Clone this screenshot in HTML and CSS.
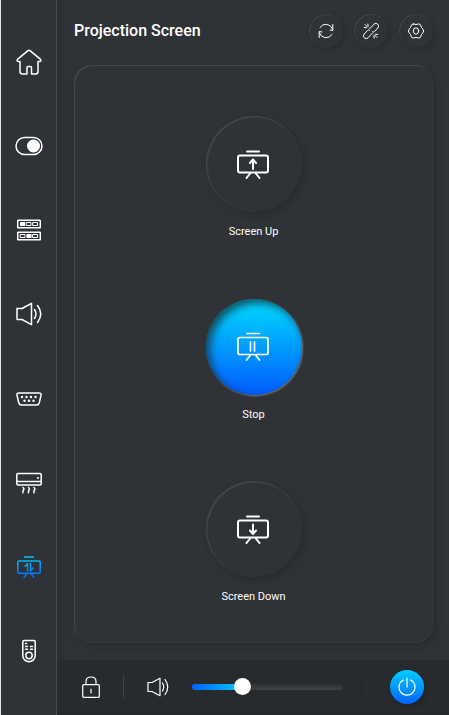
FILE: index.html
```html
<!DOCTYPE html>
<html lang="en">
<head>
<meta charset="utf-8">
<meta name="viewport" content="width=device-width, initial-scale=1">
<title>Projection Screen</title>
<link rel="stylesheet" href="styles.css">
</head>
<body>
<div class="app">
  <nav class="sidebar" aria-label="Room controls">
    <a class="nav-item" href="#home" aria-label="Home">
      <svg class="icon" width="26" height="26" viewBox="0 0 26 26"><path d="M4 12.5H2.2C.8 12.3.8 11 1.700 10.200L12 1.600Q13 .9 14 1.600L24.300 10.200C25.200 11 25.200 12.300 23.800 12.500H22V22.500Q22 25 19.500 25H15.500V18.500Q15.500 17.500 14.500 17.500H12Q11 17.500 11 18.500V25H6.500Q4 25 4 22.500Z"/></svg>
    </a>
    <a class="nav-item" href="#switch" aria-label="Switch">
      <svg class="icon" width="28" height="20" viewBox="0 0 28 20"><rect x="1" y="1.500" width="26" height="17" rx="8.500"/><circle class="solid" cx="18.500" cy="10" r="6.500"/></svg>
    </a>
    <a class="nav-item" href="#sources" aria-label="Sources">
      <svg class="icon" width="24" height="22" viewBox="0 0 24 22"><rect x=".7" y="1.200" width="22.600" height="7.600" rx=".6"/><rect x=".7" y="13.200" width="22.600" height="7.600" rx=".6"/><rect class="solid" x="3" y="3" width="5" height="4"/><rect class="solid" x="9.500" y="15" width="5" height="4"/><g class="thin"><rect x="9.500" y="3.500" width="4.500" height="3"/><rect x="16" y="3.500" width="4.500" height="3"/><rect x="3.500" y="15.500" width="4.500" height="3"/><rect x="16" y="15.500" width="4.500" height="3"/></g></svg>
    </a>
    <a class="nav-item" href="#audio" aria-label="Audio">
      <svg class="icon" width="26" height="24" viewBox="0 0 26 24"><path d="M1 6.500H6L15.500 1.300V22.700L6 17.500H1ZM18.500 7.500Q21.500 12 18.500 16.500M21.500 3.500Q28 12 21.500 20.500"/></svg>
    </a>
    <a class="nav-item" href="#video" aria-label="Video input">
      <svg class="icon" width="26" height="14" viewBox="0 0 26 14"><path d="M3 1H23Q25.500 1 25 3.300L23.200 11Q22.700 13 20.500 13H5.500Q3.300 13 2.800 11L1 3.300Q.5 1 3 1Z"/><g class="solid"><circle cx="6" cy="5" r="1.200"/><circle cx="10.500" cy="5" r="1.200"/><circle cx="15" cy="5" r="1.200"/><circle cx="19.500" cy="5" r="1.200"/><circle cx="8.500" cy="8.800" r="1.200"/><circle cx="13" cy="8.800" r="1.200"/><circle cx="17.500" cy="8.800" r="1.200"/></g></svg>
    </a>
    <a class="nav-item" href="#climate" aria-label="Air conditioning">
      <svg class="icon" width="26" height="22" viewBox="0 0 26 22"><rect x=".8" y="1.500" width="24.400" height="11.500" rx="1.200"/><path d="M1 9.500H25"/><rect class="solid" x="21" y="5" width="1.800" height="1.800"/><path d="M7 15.500Q8.500 16.500 7.500 18T7 20.800M12.500 15.500Q14 16.500 13 18T12.500 20.800M18 15.500Q19.500 16.500 18.500 18T18 20.800"/></svg>
    </a>
    <a class="nav-item" href="#screen" aria-label="Projection screen" aria-current="page">
      <svg class="icon icon-active" width="24" height="22" viewBox="0 0 24 22"><defs><linearGradient id="active-blue" gradientUnits="userSpaceOnUse" x1="0" y1="0" x2="0" y2="22"><stop offset="0" stop-color="#00c6f8"/><stop offset="1" stop-color="#0068ff"/></linearGradient></defs><path d="M7.500 1H16.500M2 5H22Q23.200 5 23.200 6.200V16Q23.200 17.200 22 17.200H2Q.8 17.200.8 16V6.200Q.8 5 2 5ZM10 17.500L7 21.500M14 17.500L17 21.500M10.500 15V7.500L8 10.500M13.500 7.500V15L16 12"/></svg>
    </a>
    <a class="nav-item" href="#remote" aria-label="Remote control">
      <svg class="icon" width="14" height="24" viewBox="0 0 14 24"><path d="M2 1.500H12Q13.200 1.500 13.200 2.700V16.500A6.200 6.200 0 0 1 .8 16.500V2.700Q.8 1.500 2 1.500Z"/><circle cx="7" cy="16.500" r="3.200"/><path d="M3.500 4.500H4.500M3.500 7.500H5.500M8.500 7.500H10.500M3.500 10.200H5.500M8.500 10.200H10.500"/></svg>
    </a>
  </nav>

  <div class="content">
    <header class="topbar">
      <h1 class="title">Projection Screen</h1>
      <div class="tools">
        <button class="tool" type="button" aria-label="Refresh">
          <svg class="icon thin" width="16" height="16" viewBox="0 0 16 16"><path d="M2 4.500A7 7 0 0 1 14.500 6M14.800 1.500V7.500L12 7M14 11.500A7 7 0 0 1 1.500 10M1.200 14.500V8.500L4 9"/></svg>
        </button>
        <button class="tool" type="button" aria-label="Disconnect">
          <svg class="icon thin" width="18" height="18" viewBox="0 0 18 18"><path d="M7.500 7L12 2.200C14.500 0 18 3 15.800 6L12.500 9.500Q11.500 10.500 10.500 9.800M10.500 11L6 15.800C3.500 18 0 15 2.200 12L5.500 8.500Q6.500 7.500 7.500 8.200M2.200 5.500L4.500 5.800M3 2.500L5.500 5M5.800 2L6.200 4.200M15.800 12.500L13.500 12.200M15 15.500L12.500 13M12.200 16L11.800 13.800"/></svg>
        </button>
        <button class="tool" type="button" aria-label="Settings">
          <svg class="icon thin" width="18" height="18" viewBox="0 0 18 18"><path d="M6.800 2Q9 3.200 11.200 2Q13.500 1.500 14 4Q14 5.800 15.500 6.500Q17.800 9 15.500 11.500Q14 12.200 14 14Q13.500 16.500 11.200 16Q9 14.800 6.800 16Q4.500 16.500 4 14Q4 12.200 2.500 11.500Q.2 9 2.500 6.500Q4 5.800 4 4Q4.500 1.500 6.800 2Z"/><ellipse cx="9" cy="9" rx="2.700" ry="3.200"/></svg>
        </button>
      </div>
    </header>

    <main class="panel">
      <div class="action">
        <button class="round" type="button" id="screen-up" aria-labelledby="screen-up-label">
          <svg class="icon bold" width="33" height="29" viewBox="0 0 33 29"><path d="M10 1.500H22M13.500 23L9.500 28M18.500 23L22.500 28"/><rect x="1" y="5.500" width="30" height="17" rx="2"/><path d="M16 19V10M13 13L16 9.500L19 13"/></svg>
        </button>
        <label class="caption" id="screen-up-label" for="screen-up">Screen Up</label>
      </div>
      <div class="action">
        <button class="round round-active" type="button" id="screen-stop" aria-labelledby="screen-stop-label">
          <svg class="icon bold" width="33" height="29" viewBox="0 0 33 29"><path d="M10 1.500H22M13.500 23L9.500 28M18.500 23L22.500 28"/><rect x="1" y="5.500" width="30" height="17" rx="2"/><path d="M13.500 10V19M17.500 10V19"/></svg>
        </button>
        <label class="caption" id="screen-stop-label" for="screen-stop">Stop</label>
      </div>
      <div class="action">
        <button class="round" type="button" id="screen-down" aria-labelledby="screen-down-label">
          <svg class="icon bold" width="33" height="29" viewBox="0 0 33 29"><path d="M10 1.500H22M13.500 23L9.500 28M18.500 23L22.500 28"/><rect x="1" y="5.500" width="30" height="17" rx="2"/><path d="M16 9.500V18.500M13 15.500L16 19L19 15.500"/></svg>
        </button>
        <label class="caption" id="screen-down-label" for="screen-down">Screen Down</label>
      </div>
    </main>

    <footer class="bottombar">
      <button class="plain" type="button" aria-label="Lock">
        <svg class="icon" width="18" height="22" viewBox="0 0 18 22"><rect x=".7" y="8.700" width="16.600" height="12.600" rx="1"/><path d="M4 8.500V5.500Q4 1 9 1T14 5.500V8.500M9 13V17"/></svg>
      </button>
      <span class="divider"></span>
      <button class="plain" type="button" aria-label="Mute">
        <svg class="icon" width="22" height="20" viewBox="0 0 22 20"><path d="M1 5.500H5L13 1.300V18.700L5 14.500H1ZM15.500 6Q18 10 15.500 14M18 2.500Q23.500 10 18 17.500"/></svg>
      </button>
      <input class="volume" type="range" min="0" max="100" value="31" aria-label="Volume">
      <span class="divider divider-faint"></span>
      <button class="power" type="button" aria-label="Power">
        <svg class="icon" width="18" height="20" viewBox="0 0 18 20"><path d="M5.500 3A8 8 0 1 0 12.500 3M9 1V10"/></svg>
      </button>
    </footer>
  </div>
</div>
</body>
</html>
```
FILE: styles.css
```css
* {
  box-sizing: border-box;
}

body {
  margin: 0;
  background: #2f3236;
  color: #fff;
  font-family: Roboto, "Liberation Sans", sans-serif;
}

button {
  padding: 0;
  border: 0;
  background: none;
  color: inherit;
  cursor: pointer;
}

.app {
  display: flex;
  min-height: 100vh;
  border-left: 1px solid #e4e6e6;
}

.sidebar {
  display: flex;
  flex-direction: column;
  flex: 0 0 56px;
  padding: 20px 0 22px;
  border-right: 1px solid #484b4f;
}

.nav-item {
  display: flex;
  flex: 1;
  align-items: center;
  justify-content: center;
  color: #fff;
}

.icon {
  display: block;
  fill: none;
  stroke: currentColor;
  stroke-width: 1.5;
  stroke-linecap: round;
  stroke-linejoin: round;
}

.icon .solid {
  fill: currentColor;
  stroke: none;
}

.thin {
  stroke-width: 1;
}

.bold {
  stroke-width: 2;
}

.round-active .bold {
  stroke-width: 1.7;
}

.icon-active {
  stroke: url(#active-blue);
}

.content {
  display: flex;
  flex: 1;
  flex-direction: column;
  min-width: 0;
  border-bottom: 2px solid #22252a;
  background: linear-gradient(90deg, #2b2e31, #2f3236 12px);
}

.topbar {
  display: flex;
  align-items: center;
  justify-content: space-between;
  padding: 14px 16px 17px 17px;
}

.title {
  margin: 0;
  font-size: 16px;
  font-weight: 500;
  line-height: 20px;
}

.tools {
  display: flex;
  gap: 11px;
}

.tool,
.round {
  display: grid;
  place-items: center;
  border-radius: 50%;
  background: #2f3236;
}

.tool {
  width: 34px;
  height: 34px;
  box-shadow: inset 1px 1px 1px #404347, 2px 2px 4px #292b2e;
}

.panel {
  display: flex;
  flex: 1;
  flex-direction: column;
  align-items: center;
  justify-content: space-between;
  margin: 0 16px 17px 17px;
  padding: 51px 0 36px;
  border-radius: 18px;
  background: #2f3236;
  box-shadow: inset 1px 1px 1px #484b4f, inset -1px -1px 1px #36393d, 3px 3px 7px #292b2e;
}

.action {
  display: flex;
  flex-direction: column;
  align-items: center;
  gap: 10px;
}

.round {
  width: 96px;
  height: 96px;
  box-shadow: inset 1px 1px 2px #4c4f53, 3px 3px 6px #292b2e;
}

.round-active {
  background: linear-gradient(#00d0ff 10%, #0062ff 95%);
  box-shadow: inset 4px 4px 8px rgba(22, 48, 58, 0.8), 1px 1px 2px #777a7e;
}

.caption {
  font-size: 11px;
  line-height: 20px;
}

.bottombar {
  display: flex;
  align-items: center;
  gap: 23px;
  height: 53px;
  padding: 0 25px;
  background: #282b2e;
}

.bottombar .icon {
  stroke-width: 1.2;
}

.divider {
  width: 1px;
  height: 22px;
  background: #414447;
}

.divider-faint {
  background: #303336;
}

.volume {
  flex: 1;
  min-width: 0;
  height: 18px;
  margin: 0;
  appearance: none;
  background: none;
}

.volume::-webkit-slider-runnable-track {
  height: 6px;
  border-radius: 3px;
  background: linear-gradient(90deg, #0062ff, #00c8ff 50px, transparent 50px), linear-gradient(#2c2f32, #414447);
}

.volume::-webkit-slider-thumb {
  width: 17px;
  height: 17px;
  margin-top: -6px;
  appearance: none;
  border-radius: 50%;
  background: #fff;
}

.power {
  display: grid;
  place-items: center;
  width: 34px;
  height: 34px;
  border-radius: 50%;
  background: linear-gradient(#00d0ff, #0062ff);
  box-shadow: 2px 2px 4px #1f2225;
}
```
